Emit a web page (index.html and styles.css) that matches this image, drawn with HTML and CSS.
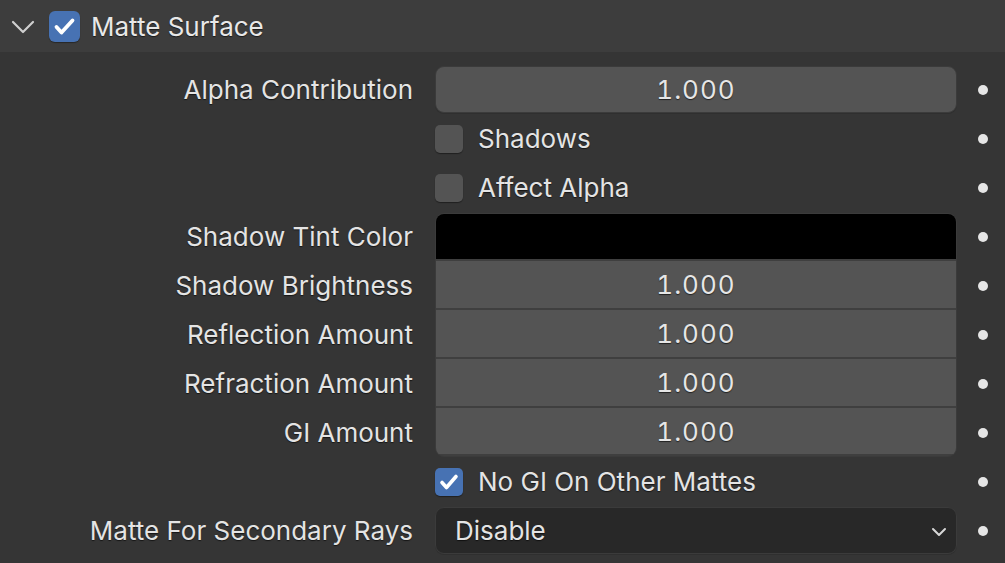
FILE: index.html
```html
<!DOCTYPE html>
<html>
<head>
<meta charset="utf-8">
<link rel="stylesheet" href="styles.css">
</head>
<body>
<div class="panel">
  <div class="header">
    <svg class="chev" width="24" height="14" viewBox="0 0 24 14"><polyline points="2,2 12,12 22,2" fill="none" stroke="#cfcfcf" stroke-width="2.2" stroke-linecap="round" stroke-linejoin="round"/></svg>
    <span class="hcheck"><svg width="31" height="31" viewBox="0 0 31 31"><polyline points="7.5,16 12.5,21.5 23.5,9.5" fill="none" stroke="#fff" stroke-width="3.8" stroke-linecap="round" stroke-linejoin="round"/></svg></span>
    <span class="htitle">Matte Surface</span>
  </div>
  <div class="body">
    <div class="row">
      <div class="label">Alpha Contribution</div>
      <div class="cell"><div class="num single">1.000</div></div>
      <div class="dotcell"><span class="dot"></span></div>
    </div>
    <div class="row">
      <div class="label"></div>
      <div class="cell"><span class="cb"></span><span class="cbtext">Shadows</span></div>
      <div class="dotcell"><span class="dot"></span></div>
    </div>
    <div class="row">
      <div class="label"></div>
      <div class="cell"><span class="cb"></span><span class="cbtext">Affect Alpha</span></div>
      <div class="dotcell"><span class="dot"></span></div>
    </div>
    <div class="group">
      <div class="labels">
        <div class="glabel">Shadow Tint Color</div>
        <div class="glabel">Shadow Brightness</div>
        <div class="glabel">Reflection Amount</div>
        <div class="glabel">Refraction Amount</div>
        <div class="glabel">GI Amount</div>
      </div>
      <div class="stack">
        <div class="color"></div>
        <div class="num gnum">1.000</div>
        <div class="num gnum">1.000</div>
        <div class="num gnum">1.000</div>
        <div class="num gnum last">1.000</div>
      </div>
      <div class="dots">
        <div class="dotcell"><span class="dot"></span></div>
        <div class="dotcell"><span class="dot"></span></div>
        <div class="dotcell"><span class="dot"></span></div>
        <div class="dotcell"><span class="dot"></span></div>
        <div class="dotcell"><span class="dot"></span></div>
      </div>
    </div>
    <div class="row">
      <div class="label"></div>
      <div class="cell"><span class="cb on"><svg width="28" height="28" viewBox="0 0 28 28"><polyline points="7,14.5 11.5,19.5 21,8.5" fill="none" stroke="#fff" stroke-width="3.6" stroke-linecap="round" stroke-linejoin="round"/></svg></span><span class="cbtext">No GI On Other Mattes</span></div>
      <div class="dotcell"><span class="dot"></span></div>
    </div>
    <div class="row">
      <div class="label">Matte For Secondary Rays</div>
      <div class="cell"><div class="menu"><span>Disable</span><svg width="16" height="10" viewBox="0 0 16 10"><polyline points="2,2 8,8 14,2" fill="none" stroke="#d8d8d8" stroke-width="2" stroke-linecap="round" stroke-linejoin="round"/></svg></div></div>
      <div class="dotcell"><span class="dot"></span></div>
    </div>
  </div>
</div>
</body>
</html>
```

FILE: styles.css
```css
html, body {
  margin: 0;
  padding: 0;
  background: #353535;
  width: 1005px;
  height: 563px;
  overflow: hidden;
}
body {
  font-family: Inter, "Noto Sans", sans-serif;
  font-size: 26px;
  color: #e4e4e4;
}
.panel {
  width: 1005px;
}
.header {
  height: 52px;
  background: #3d3d3d;
  display: flex;
  align-items: center;
}
.chev {
  margin-left: 11px;
  margin-top: 2px;
}
.hcheck {
  margin-left: 14px;
  width: 31px;
  height: 31px;
  border-radius: 6px;
  background: #4772b3;
  box-shadow: 0 1px 1px rgba(0,0,0,0.35);
  display: flex;
}
.htitle {
  margin-left: 11px;
  font-size: 26px;
  color: #e8e8e8;
  text-shadow: 0 1px 1px rgba(0,0,0,0.6);
}
.body {
  padding-top: 13px;
}
.row {
  display: flex;
  height: 49px;
  align-items: center;
}
.label, .glabel {
  width: 413px;
  text-align: right;
  text-shadow: 0 1px 1px rgba(0,0,0,0.6);
  flex: none;
}
.cell {
  width: 522px;
  margin-left: 22px;
  display: flex;
  align-items: center;
  flex: none;
}
.dotcell {
  width: 48px;
  height: 49px;
  display: flex;
  align-items: center;
  justify-content: center;
  margin-left: 2px;
  flex: none;
}
.dot {
  width: 10px;
  height: 10px;
  border-radius: 50%;
  background: #e6e6e6;
}
.num {
  background: #545454;
  text-align: center;
  color: #e6e6e6;
  text-shadow: 0 1px 1px rgba(0,0,0,0.6);
  box-sizing: border-box;
  font-variant-numeric: tabular-nums;
  letter-spacing: 1px;
}
.single {
  width: 522px;
  height: 47px;
  line-height: 45px;
  border-radius: 9px;
  border: 1px solid #3b3b3b;
  box-shadow: 0 1px 0 #2f2f2f;
}
.cb {
  width: 28px;
  height: 28px;
  border-radius: 5px;
  background: #545454;
  box-shadow: 0 1px 1px rgba(0,0,0,0.4);
  display: flex;
  flex: none;
}
.cb.on {
  background: #4772b3;
}
.cbtext {
  margin-left: 15px;
  text-shadow: 0 1px 1px rgba(0,0,0,0.6);
}
.group {
  display: flex;
  padding-top: 1px;
  height: 244px;
}
.labels {
  display: flex;
  flex-direction: column;
}
.glabel {
  height: 49px;
  line-height: 49px;
}
.labels .glabel:first-child {
  margin-top: -1px;
}
.stack {
  width: 522px;
  margin-left: 22px;
  display: flex;
  flex-direction: column;
  border: 1px solid #3b3b3b;
  border-radius: 9px;
  overflow: hidden;
  box-sizing: border-box;
  height: 244px;
  background: #3f3f3f;
  flex: none;
}
.color {
  height: 45px;
  background: #000;
  flex: none;
}
.gnum {
  height: 47px;
  line-height: 47px;
  margin-top: 2px;
  flex: none;
}
.gnum.last {
  height: 46px;
  line-height: 48px;
}
.dots {
  display: flex;
  flex-direction: column;
  margin-top: -1px;
}
.menu {
  width: 522px;
  height: 47px;
  box-sizing: border-box;
  border-radius: 9px;
  border: 1px solid #3b3b3b;
  background: #282828;
  display: flex;
  align-items: center;
  justify-content: space-between;
  padding-left: 19px;
  padding-right: 9px;
  box-shadow: 0 1px 0 #2f2f2f;
}
.menu span {
  text-shadow: 0 1px 1px rgba(0,0,0,0.6);
}
.menu svg {
  margin-top: 2px;
}
```
